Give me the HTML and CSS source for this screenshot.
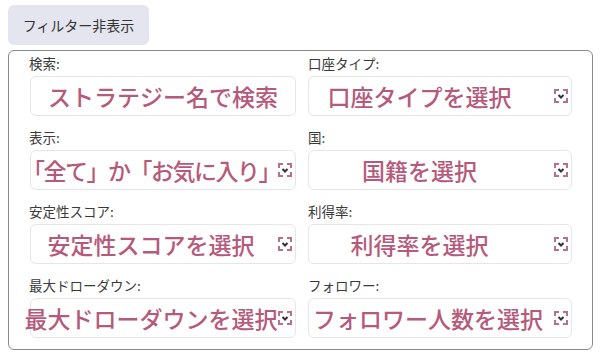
FILE: index.html
```html
<!DOCTYPE html>
<html lang="ja">
<head>
<meta charset="utf-8">
<link rel="stylesheet" href="styles.css">
</head>
<body>
<button class="toggle">フィルター非表示</button>
<div class="panel">
  <div class="field">
    <label class="label">検索:</label>
    <div class="input"><span class="value">ストラテジー名で検索</span></div>
  </div>
  <div class="field">
    <label class="label">口座タイプ:</label>
    <div class="input select"><span class="value">口座タイプを選択</span>
      <svg class="caret" viewBox="0 0 14 14"><path class="corner" d="M1 5V1h4M9 1h4v4M13 9v4H9M5 13H1V9"/><path class="chev" d="M4.5 6l2.5 2.5L9.5 6"/></svg>
    </div>
  </div>
  <div class="field">
    <label class="label">表示:</label>
    <div class="input select"><span class="value value--dense">「全て」か「お気に入り」</span>
      <svg class="caret" viewBox="0 0 14 14"><path class="corner" d="M1 5V1h4M9 1h4v4M13 9v4H9M5 13H1V9"/><path class="chev" d="M4.5 6l2.5 2.5L9.5 6"/></svg>
    </div>
  </div>
  <div class="field">
    <label class="label">国:</label>
    <div class="input select"><span class="value">国籍を選択</span>
      <svg class="caret" viewBox="0 0 14 14"><path class="corner" d="M1 5V1h4M9 1h4v4M13 9v4H9M5 13H1V9"/><path class="chev" d="M4.5 6l2.5 2.5L9.5 6"/></svg>
    </div>
  </div>
  <div class="field">
    <label class="label">安定性スコア:</label>
    <div class="input select"><span class="value">安定性スコアを選択</span>
      <svg class="caret" viewBox="0 0 14 14"><path class="corner" d="M1 5V1h4M9 1h4v4M13 9v4H9M5 13H1V9"/><path class="chev" d="M4.5 6l2.5 2.5L9.5 6"/></svg>
    </div>
  </div>
  <div class="field">
    <label class="label">利得率:</label>
    <div class="input select"><span class="value">利得率を選択</span>
      <svg class="caret" viewBox="0 0 14 14"><path class="corner" d="M1 5V1h4M9 1h4v4M13 9v4H9M5 13H1V9"/><path class="chev" d="M4.5 6l2.5 2.5L9.5 6"/></svg>
    </div>
  </div>
  <div class="field">
    <label class="label">最大ドローダウン:</label>
    <div class="input select"><span class="value">最大ドローダウンを選択</span>
      <svg class="caret" viewBox="0 0 14 14"><path class="corner" d="M1 5V1h4M9 1h4v4M13 9v4H9M5 13H1V9"/><path class="chev" d="M4.5 6l2.5 2.5L9.5 6"/></svg>
    </div>
  </div>
  <div class="field">
    <label class="label">フォロワー:</label>
    <div class="input select"><span class="value">フォロワー人数を選択</span>
      <svg class="caret" viewBox="0 0 14 14"><path class="corner" d="M1 5V1h4M9 1h4v4M13 9v4H9M5 13H1V9"/><path class="chev" d="M4.5 6l2.5 2.5L9.5 6"/></svg>
    </div>
  </div>
</div>
</body>
</html>
```
FILE: styles.css
```css
html, body {
  margin: 0;
  background: #ffffff;
}
body {
  padding: 5px 7px 0 8px;
  font-family: "Noto Sans CJK JP", "Noto Sans", sans-serif;
  color: #333333;
}
.toggle {
  display: block;
  width: 141px;
  height: 40px;
  border: none;
  border-radius: 6px;
  background: #e4e5ee;
  color: #333333;
  font-family: "Noto Sans CJK JP", "Noto Sans", sans-serif;
  font-size: 14px;
  padding: 0;
  text-align: center;
}
.panel {
  margin-top: 5px;
  width: 585px;
  height: 300px;
  box-sizing: border-box;
  border: 1px solid #8a8a8a;
  border-radius: 6px;
  padding: 3px 20px 0 19px;
  display: grid;
  grid-template-columns: 268px 264px;
  column-gap: 12px;
  row-gap: 12px;
  align-content: start;
}
.field {
  display: flex;
  flex-direction: column;
  gap: 4px;
  min-width: 0;
}
.label {
  font-size: 13.5px;
  line-height: 18px;
  font-weight: 400;
  color: #3a3a3a;
  white-space: nowrap;
}
.field:nth-child(odd) .label {
  padding-left: 1px;
}
.field:nth-child(odd) .input {
  margin-left: 2px;
}
.input {
  position: relative;
  height: 40px;
  box-sizing: border-box;
  border: 1px solid #e6e6e6;
  border-radius: 6px;
  display: flex;
  justify-content: center;
  align-items: center;
}
.field:nth-child(odd) .input.select {
  padding-right: 24px;
}
.field:nth-child(even) .input.select {
  justify-content: flex-start;
  padding-left: 4px;
  padding-right: 45px;
}
.field:nth-child(even) .input.select .value {
  margin: 0 auto;
}
.value {
  font-size: 23px;
  line-height: 1;
  font-weight: 500;
  color: #b65a7b;
  white-space: nowrap;
}
.value--dense {
  letter-spacing: -1.5px;
}
.caret {
  position: absolute;
  right: 3px;
  top: 12px;
  width: 14px;
  height: 14px;
}
.corner {
  fill: none;
  stroke: #b8708c;
  stroke-width: 2;
}
.chev {
  fill: none;
  stroke: #333333;
  stroke-width: 2;
}
```
